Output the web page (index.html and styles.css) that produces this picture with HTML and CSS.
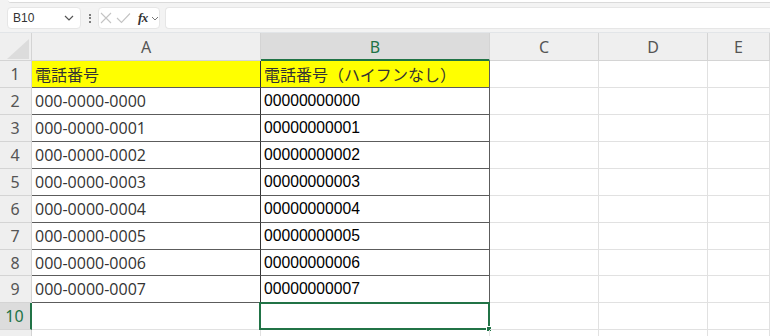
FILE: index.html
```html
<!DOCTYPE html>
<html lang="ja">
<head>
<meta charset="utf-8">
<title>Sheet</title>
<link rel="stylesheet" href="styles.css">
</head>
<body>
<div class="app">
  <div class="ribbon-edge"></div>
  <div class="formula-bar">
    <div class="name-box">
      <span class="name-text">B10</span>
      <svg class="chev" width="10" height="6" viewBox="0 0 10 6"><path d="M1 1 L5 5 L9 1" fill="none" stroke="#555" stroke-width="1.2"/></svg>
    </div>
    <div class="dots"><span></span><span></span><span></span></div>
    <div class="fx-box">
      <svg width="12" height="12" viewBox="0 0 12 12"><path d="M1 1 L11 11 M11 1 L1 11" stroke="#c4c4c4" stroke-width="1.1" fill="none"/></svg>
      <svg width="15" height="12" viewBox="0 0 15 12"><path d="M1 6 L5.5 10.5 L14 1.5" stroke="#c4c4c4" stroke-width="1.1" fill="none"/></svg>
      <span class="fx">fx</span>
      <svg class="chev-s" width="8" height="5" viewBox="0 0 8 5"><path d="M1 1 L4 4 L7 1" fill="none" stroke="#777" stroke-width="1"/></svg>
    </div>
    <div class="input-box"></div>
  </div>
  <div class="sheet">
    <div class="hdr corner"><svg width="22" height="20" viewBox="0 0 22 20"><path d="M22 0 L22 20 L0 20 Z" fill="#dcdcdc"/></svg></div>
    <div class="hdr col">A</div>
    <div class="hdr col sel-col">B</div>
    <div class="hdr col">C</div>
    <div class="hdr col">D</div>
    <div class="hdr col">E</div>

    <div class="hdr row">1</div>
    <div class="cell a yellow jp">電話番号</div>
    <div class="cell b yellow jp">電話番号（ハイフンなし）</div>
    <div class="cell"></div><div class="cell"></div><div class="cell"></div>

    <div class="hdr row">2</div>
    <div class="cell a">000-0000-0000</div>
    <div class="cell b num">00000000000</div>
    <div class="cell"></div><div class="cell"></div><div class="cell"></div>

    <div class="hdr row">3</div>
    <div class="cell a">000-0000-0001</div>
    <div class="cell b num">00000000001</div>
    <div class="cell"></div><div class="cell"></div><div class="cell"></div>

    <div class="hdr row">4</div>
    <div class="cell a">000-0000-0002</div>
    <div class="cell b num">00000000002</div>
    <div class="cell"></div><div class="cell"></div><div class="cell"></div>

    <div class="hdr row">5</div>
    <div class="cell a">000-0000-0003</div>
    <div class="cell b num">00000000003</div>
    <div class="cell"></div><div class="cell"></div><div class="cell"></div>

    <div class="hdr row">6</div>
    <div class="cell a">000-0000-0004</div>
    <div class="cell b num">00000000004</div>
    <div class="cell"></div><div class="cell"></div><div class="cell"></div>

    <div class="hdr row">7</div>
    <div class="cell a">000-0000-0005</div>
    <div class="cell b num">00000000005</div>
    <div class="cell"></div><div class="cell"></div><div class="cell"></div>

    <div class="hdr row">8</div>
    <div class="cell a">000-0000-0006</div>
    <div class="cell b num">00000000006</div>
    <div class="cell"></div><div class="cell"></div><div class="cell"></div>

    <div class="hdr row">9</div>
    <div class="cell a">000-0000-0007</div>
    <div class="cell b num">00000000007</div>
    <div class="cell"></div><div class="cell"></div><div class="cell"></div>

    <div class="hdr row sel-row">10</div>
    <div class="cell"></div>
    <div class="cell selected"><span class="handle"></span></div>
    <div class="cell"></div><div class="cell"></div><div class="cell"></div>

    <div class="hdr row"></div>
    <div class="cell"></div><div class="cell"></div><div class="cell"></div><div class="cell"></div><div class="cell"></div>
  </div>
</div>
</body>
</html>
```

FILE: styles.css
```css
* { box-sizing: border-box; }
html, body { margin: 0; padding: 0; }
body {
  width: 770px;
  height: 336px;
  overflow: hidden;
  background: #f3f3f3;
  font-family: "Open Sans", "Noto Sans CJK JP", sans-serif;
}
.app { width: 770px; height: 336px; overflow: hidden; }

.ribbon-edge {
  height: 3px;
  margin-left: 8px;
  background: #ffffff;
  border-bottom: 1px solid #dadada;
  border-bottom-left-radius: 3px;
}

.formula-bar {
  height: 30px;
  padding: 4px 0 0 7px;
  display: flex;
  align-items: flex-start;
  background: #f3f3f3;
  border-bottom: 1px solid #e2e5e8;
}
.name-box {
  width: 74px;
  height: 22px;
  background: #fff;
  border: 1px solid #e6e6e6;
  border-radius: 4px;
  display: flex;
  align-items: center;
  justify-content: space-between;
  padding: 0 6px 0 5px;
}
.name-text {
  font-family: "Liberation Sans", Arial, sans-serif;
  font-size: 12px;
  color: #333;
}
.dots {
  width: 17px;
  height: 22px;
  display: flex;
  flex-direction: column;
  align-items: center;
  justify-content: center;
  gap: 1.5px;
}
.dots span {
  width: 2px;
  height: 2px;
  background: #555;
  border-radius: 1px;
}
.fx-box {
  width: 62px;
  height: 22px;
  background: #fff;
  border: 1px solid #e6e6e6;
  border-radius: 4px;
  display: flex;
  align-items: center;
  padding-left: 1px;
  gap: 4px;
}
.fx {
  font-family: "Liberation Serif", "Times New Roman", serif;
  font-style: italic;
  font-weight: bold;
  font-size: 13px;
  color: #333;
  margin-left: 3px;
  letter-spacing: -0.5px;
}
.chev-s { margin-left: -1px; }
.input-box {
  flex: 1;
  height: 22px;
  margin-left: 5px;
  background: #fff;
  border: 1px solid #e6e6e6;
  border-right: none;
  border-radius: 4px 0 0 4px;
}

.sheet {
  display: grid;
  grid-template-columns: 32px 229px 229px 109px 109px 1fr;
  grid-template-rows: 28px 27px 27px 27px 27px 27px 27px 27px 26px 27px 27px 27px;
  background: #fff;
}
.hdr {
  background: #efefef;
  border-right: 1px solid #d4d4d4;
  border-bottom: 1px solid #d4d4d4;
  color: #555;
  font-family: "Noto Sans", sans-serif;
  font-size: 16px;
  display: flex;
  align-items: center;
  justify-content: center;
}
.corner {
  justify-content: flex-end;
  align-items: flex-end;
  padding: 0 2px 1px 0;
}
.corner svg { display: block; }
.col { padding-top: 1px; }
.row { font-size: 16px; padding-right: 1px; }
.sel-col {
  background: #dcdcdc;
  color: #217346;
  border-bottom: 2px solid #217346;
}
.sel-row {
  background: #dcdcdc;
  color: #217346;
  border-right: 2px solid #217346;
}

.cell {
  border-right: 1px solid #e1e1e1;
  border-bottom: 1px solid #e1e1e1;
  display: flex;
  align-items: center;
  padding-left: 3px;
  font-size: 16px;
  white-space: nowrap;
  overflow: hidden;
  position: relative;
}
.cell.a {
  color: #333;
  border-bottom-color: #5c5c5c;
  border-right-color: #333;
}
.cell.b {
  border-bottom-color: #5c5c5c;
  border-right-color: #5c5c5c;
  color: #000;
}
.yellow { background: #ffff00; }
.jp {
  font-family: "Noto Sans CJK JP", sans-serif;
  font-size: 16px;
  color: #333 !important;
}
.num {
  font-family: "Liberation Sans", Arial, sans-serif;
  font-size: 15.7px;
  color: #000;
}
.selected {
  border: 2px solid #217346;
  margin-left: -2px;
  margin-top: -1px;
  overflow: visible;
}
.handle {
  position: absolute;
  right: -4px;
  bottom: -4px;
  width: 6px;
  height: 6px;
  background: #217346;
  border: 1px solid #fff;
}
```
